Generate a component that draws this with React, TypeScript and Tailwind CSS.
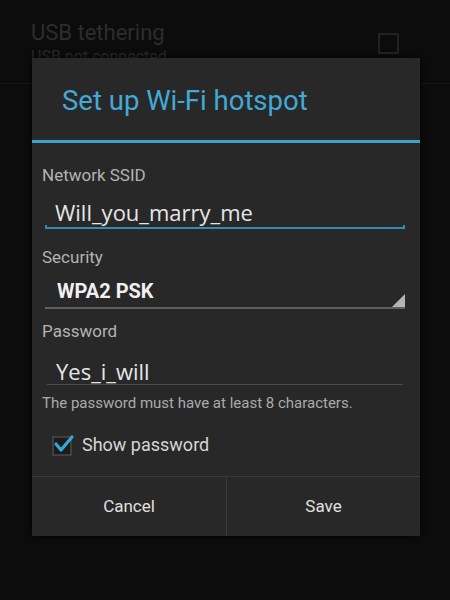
import React from "react";

const roboto = { fontFamily: "Roboto, 'Liberation Sans', sans-serif" };
const inputFont = { fontFamily: "'Open Sans', 'DejaVu Sans', sans-serif" };

function CheckIcon() {
  return (
    <svg width="24" height="24" viewBox="0 0 24 24" className="shrink-0">
      <rect x="2" y="4" width="18" height="18" fill="#1c1c1c" stroke="#4a4a4a" strokeWidth="1.5" />
      <polyline points="5,11 10,17 21,4" fill="none" stroke="#35a9d6" strokeWidth="3.2" strokeLinejoin="round" strokeLinecap="round" />
    </svg>
  );
}

export default function App() {
  return (
    <div
      className="relative h-[600px] w-[450px] overflow-hidden bg-[#0c0c0d]"
      style={roboto}
    >
      {/* settings list behind the dialog */}
      <div className="flex items-start justify-between pl-[31px] pr-[51px] pt-[19px]">
        <div>
          <div className="text-[22px] leading-[28px] text-[#2d2d2d]">USB tethering</div>
          <div className="text-[16px] leading-[20px] text-[#282828]">USB not connected</div>
        </div>
        <div className="mt-[14px] h-[21px] w-[21px] border-2 border-[#222]" />
      </div>
      <div className="mt-[16px] h-px bg-[#161616]" />

      {/* dialog */}
      <div className="absolute left-[32px] top-[58px] flex h-[478px] w-[388px] flex-col bg-[#282828] shadow-[0_0_6px_rgba(0,0,0,0.8)]">
        <div className="flex h-[82px] items-center pl-[30px] pt-[3px] text-[27.5px] text-[#42aad6]">
          Set up Wi-Fi hotspot
        </div>
        <div className="h-[3px] bg-[#3ba3cc]" />

        <div className="flex flex-col pl-[10px]">
          <div className="mt-[22px] text-[17px] leading-[20px] text-[#b3b3b3]">Network SSID</div>
          <div className="ml-[3px] mt-[14px] w-[360px]">
            <div className="pl-[10px] text-[22px] leading-[26px] text-[#e6e6e6]" style={inputFont}>
              Will_you_marry_me
            </div>
            <div className="h-[4px] border-x-2 border-b-2 border-[#2e8db1]" />
          </div>

          <div className="mt-[18px] text-[17px] leading-[20px] text-[#b3b3b3]">Security</div>
          <div className="ml-[3px] mt-[12px] w-[360px] border-b-2 border-[#5e5e5e]">
            <div className="flex items-end justify-between">
              <span className="pb-[4px] pl-[12px] text-[20px] font-bold leading-[24px] text-[#f0f0f0]">
                WPA2 PSK
              </span>
              <svg width="13" height="13" viewBox="0 0 13 13">
                <polygon points="13,0 13,13 0,13" fill="#b4b4b4" />
              </svg>
            </div>
          </div>

          <div className="mt-[12px] text-[17px] leading-[20px] text-[#b3b3b3]">Password</div>
          <div className="ml-[5px] mt-[17px] w-[356px] border-b border-[#4c4c4c]">
            <div className="pl-[9px] text-[22px] leading-[26px] text-[#e6e6e6]" style={inputFont}>
              Yes_i_will
            </div>
          </div>
          <div className="mt-[9px] text-[15px] leading-[18px] text-[#ababab]">
            The password must have at least 8 characters.
          </div>

          <div className="ml-[9px] mt-[21px] flex items-center gap-[7px]">
            <CheckIcon />
            <span className="text-[18px] leading-[24px] text-[#d6d6d6]">Show password</span>
          </div>
        </div>

        <div className="mt-auto flex h-[60px] border-t border-[#3a3a3a]">
          <div className="flex w-[195px] items-center justify-center border-r border-[#3a3a3a] text-[17px] text-[#e0e0e0]">
            Cancel
          </div>
          <div className="flex flex-1 items-center justify-center text-[17px] text-[#e0e0e0]">
            Save
          </div>
        </div>
      </div>
    </div>
  );
}
